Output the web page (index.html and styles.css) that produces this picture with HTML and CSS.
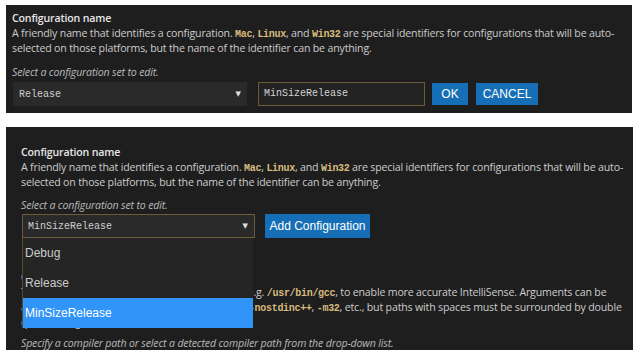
FILE: index.html
```html
<!DOCTYPE html>
<html lang="en">
  <head>
    <meta charset="UTF-8" />
    <meta name="viewport" content="width=device-width, initial-scale=1.0" />
    <title>Configuration name</title>
    <link rel="stylesheet" href="styles.css">
  </head>
  <body>
    <!-- Edit mode: renaming a configuration -->
    <section class="panel panel-top">
      <h2 class="setting-title">Configuration name</h2>
      <p class="setting-desc">
        A friendly name that identifies a configuration. <code>Mac</code>, <code>Linux</code>, and <code>Win32</code> are special identifiers for configurations that will be auto-<br>selected on those platforms, but the name of the identifier can be anything.
      </p>
      <p class="setting-hint">Select a configuration set to edit.</p>
      <div class="config-row">
        <div class="select select-top">
          <span class="select-value">Release</span>
          <span class="select-arrow">&#9660;</span>
        </div>
        <div class="name-input">MinSizeRelease</div>
        <button class="btn btn-ok">OK</button>
        <button class="btn btn-cancel">CANCEL</button>
      </div>
    </section>

    <!-- Select mode: dropdown opened -->
    <section class="panel panel-bottom">
      <h2 class="setting-title">Configuration name</h2>
      <p class="setting-desc">
        A friendly name that identifies a configuration. <code>Mac</code>, <code>Linux</code>, and <code>Win32</code> are special identifiers for configurations that will be auto-<br>selected on those platforms, but the name of the identifier can be anything.
      </p>
      <p class="setting-hint">Select a configuration set to edit.</p>
      <div class="config-row">
        <div class="select-wrap">
          <div class="select select-open">
            <span class="select-value">MinSizeRelease</span>
            <span class="select-arrow">&#9660;</span>
          </div>
          <ul class="dropdown">
            <li class="dropdown-item">Debug</li>
            <li class="dropdown-item">Release</li>
            <li class="dropdown-item active">MinSizeRelease</li>
          </ul>
        </div>
        <button class="btn btn-add">Add Configuration</button>
      </div>

      <h2 class="setting-title compiler-title">Compiler path</h2>
      <p class="setting-desc">
        The full path of the compiler that is being used, e.g. <code>/usr/bin/gcc</code>, to enable more accurate IntelliSense. Arguments can be<br>added to modify the includes/defines used, e.g. <code>-nostdinc++</code>, <code>-m32</code>, etc., but paths with spaces must be surrounded by double<br>quotes if arguments are used.
      </p>
      <p class="setting-hint compiler-hint">Specify a compiler path or select a detected compiler path from the drop-down list.</p>
    </section>
  </body>
</html>
```

FILE: styles.css
```css
* {
  margin: 0;
  padding: 0;
  box-sizing: border-box;
}

body {
  background: #ffffff;
  font-family: "Open Sans", "Noto Sans", Arial, sans-serif;
  font-size: 10.6px;
  letter-spacing: -0.17px;
  color: #cccccc;
  padding: 5px 0 0 6px;
}

.panel {
  background: #1e1e1e;
  width: 626px;
  overflow: hidden;
}

.panel-top {
  height: 108px;
  padding: 6px 0 0 6px;
}

.panel-bottom {
  height: 223px;
  margin-top: 14px;
  padding: 18px 0 0 15px;
  width: 627px;
}

.setting-title {
  font-size: 10.6px;
  font-weight: 600;
  color: #e6e6e6;
  line-height: 15px;
}

.setting-desc {
  line-height: 15px;
  white-space: nowrap;
}

.setting-desc code {
  font-family: "Liberation Mono", "DejaVu Sans Mono", monospace;
  font-size: 10px;
  font-weight: bold;
  letter-spacing: -0.3px;
  line-height: 1;
  color: #d7ba7d;
}

.setting-hint {
  font-style: italic;
  color: #b9b9b9;
  line-height: 15px;
  margin-top: 9px;
}

.panel-bottom .setting-hint {
  margin-top: 8px;
}

.config-row {
  display: flex;
  align-items: center;
  margin-top: 2px;
}

.panel-bottom .config-row {
  margin-top: 1px;
}

.select {
  display: flex;
  align-items: center;
  justify-content: space-between;
  height: 24px;
  background: #2a2a2a;
  font-family: "Liberation Mono", "DejaVu Sans Mono", monospace;
  font-size: 10px;
  letter-spacing: 0;
  color: #cfcfcf;
}

.select-top {
  width: 234px;
  margin-left: 1px;
  padding: 0 6px 0 6px;
}

.select-arrow {
  font-family: "DejaVu Sans", sans-serif;
  font-size: 7px;
  color: #e0e0e0;
}

.name-input {
  width: 167px;
  height: 24px;
  margin-left: 11px;
  padding: 0 5px;
  border: 1px solid #6e5a38;
  background: #232323;
  font-family: "Liberation Mono", "DejaVu Sans Mono", monospace;
  font-size: 10px;
  letter-spacing: 0;
  color: #d4d4d4;
  line-height: 22px;
}

.btn {
  border: none;
  background: #166fb6;
  color: #ffffff;
  font-family: "Liberation Sans", Arial, sans-serif;
  font-size: 12px;
  letter-spacing: 0;
  height: 22px;
}

.btn-ok {
  width: 36px;
  margin-left: 7px;
}

.btn-cancel {
  width: 62px;
  margin-left: 8px;
}

.select-wrap {
  position: relative;
  width: 233px;
  margin-left: 1px;
}

.select-open {
  border: 1px solid #6e5a38;
  padding: 0 6px 0 5px;
}

.dropdown {
  list-style: none;
  position: absolute;
  top: 100%;
  left: 0;
  width: 231px;
  z-index: 2;
  background: #252526;
  border-left: 1px solid #5a4a30;
  font-family: "Liberation Sans", Arial, sans-serif;
  font-size: 12px;
  letter-spacing: 0;
  color: #cccccc;
}

.dropdown-item {
  height: 30px;
  line-height: 30px;
  padding-left: 2px;
}

.dropdown-item.active {
  background: #3094f8;
  color: #ffffff;
}

.btn-add {
  width: 105px;
  height: 24px;
  margin-left: 10px;
}

.compiler-title {
  margin-top: 32px;
}

.panel-bottom .compiler-hint {
  margin-top: 6px;
}
```
